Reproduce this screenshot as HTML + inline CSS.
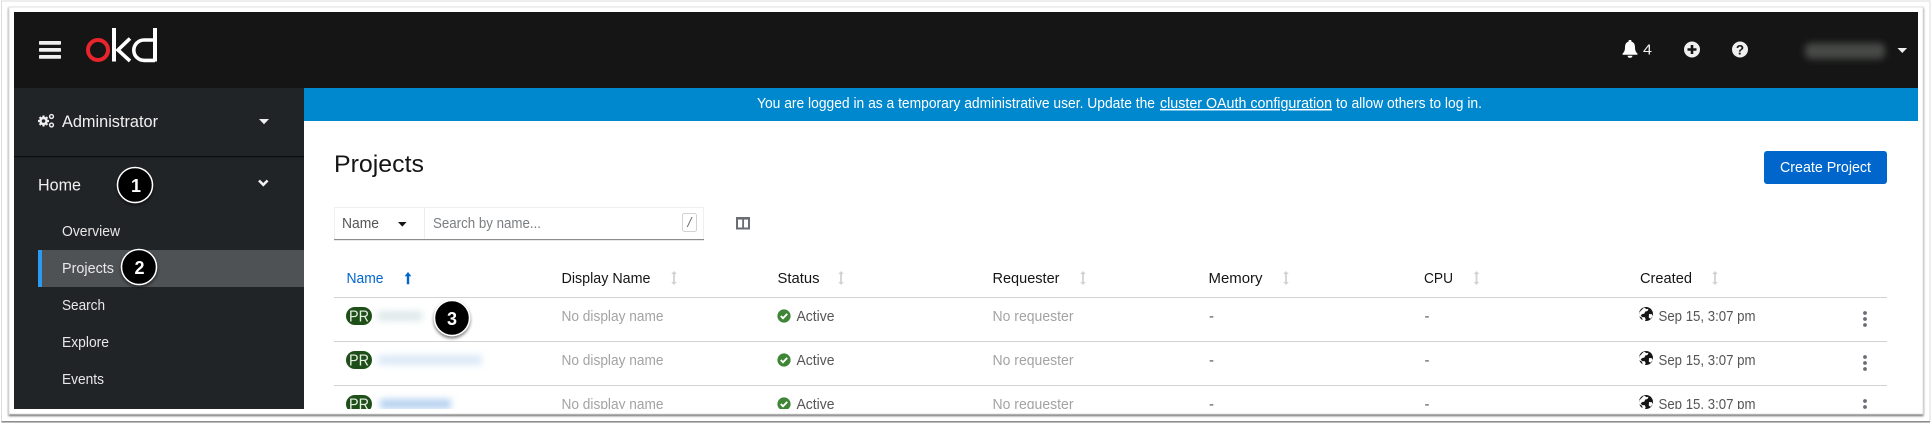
<!DOCTYPE html>
<html><head><meta charset="utf-8"><style>
html,body{margin:0;padding:0;background:#fff;width:1932px;height:425px;overflow:hidden}
svg{display:block}
text{font-family:"Liberation Sans",sans-serif}
.s{font-size:15px;fill:#e8e8e8}
.h{font-size:15px;fill:#151515}
.m{font-size:15px;fill:#a3a3a3}
.d{font-size:15px;fill:#555}
.c{font-size:18px;font-weight:bold;fill:#fff;text-anchor:middle}
</style></head><body>
<svg width="1932" height="425" viewBox="0 0 1932 425" xmlns="http://www.w3.org/2000/svg">
<defs>
<filter id="b" x="-30%" y="-100%" width="160%" height="300%"><feGaussianBlur stdDeviation="3.5"/></filter>
<filter id="sh" x="-5%" y="-5%" width="110%" height="110%"><feDropShadow dx="0" dy="1.5" stdDeviation="1" flood-color="#555" flood-opacity=".9"/></filter>
<filter id="cs" x="-40%" y="-40%" width="180%" height="180%"><feDropShadow dx="0" dy="2" stdDeviation="1.5" flood-color="#000" flood-opacity=".55"/></filter>
<clipPath id="app"><rect x="14" y="12" width="1904" height="397"/></clipPath>
<g id="sort"><path d="M0 -7l-2.8 3h1.9v8h-1.9l2.8 3 2.8-3h-1.9v-8h1.9z" fill="#d2d2d2"/></g>
<g id="chk"><circle r="6.6" fill="#3e8635"/><path d="M-3.2 0l2.2 2.3 4.2-4.4" fill="none" stroke="#fff" stroke-width="1.9"/></g>
<g id="globe"><circle r="7" fill="#151515"/><path d="M-2-6.5l2.5 1.6 2-.4-1 2.3-2.4.6-.6 1.9-2.5.6-1.3 1.6 1.6 1.4 2.6.1.8 2.2-1.2 2.4-1.6-.8-1-3.4-3-1.6.4-3.6zM3 0l3 .2.8 2-2.4 2.6-1.6-1.2z" fill="#fff"/></g>
<g id="keb" fill="#6a6e73"><circle cx="0" cy="-6" r="1.9"/><circle cx="0" cy="0" r="1.9"/><circle cx="0" cy="6" r="1.9"/></g>
</defs>

<rect width="1932" height="425" fill="#fff"/>
<rect x="1.5" y="1" width="1928.5" height="420.5" fill="#fff" stroke="#dcdcdc" stroke-width="1"/>
<rect x="1.5" y="421" width="1928.5" height="1.6" fill="#8e8e8e"/>
<rect x="9" y="7" width="1914" height="407" fill="#fff" stroke="#e2e2e2" stroke-width="1" filter="url(#sh)"/>

<g clip-path="url(#app)">
<rect x="14" y="12" width="1904" height="397" fill="#fff"/>
<rect x="14" y="12" width="1904" height="76" fill="#151515"/>
<rect x="14" y="88" width="290" height="321" fill="#212427"/>
<rect x="304" y="88" width="1614" height="33" fill="#0088ce"/>

<!-- masthead -->
<g fill="#f0f0f0"><rect x="39" y="41" width="22" height="3.8" rx=".8"/><rect x="39" y="48" width="22" height="3.8" rx=".8"/><rect x="39" y="55" width="22" height="3.8" rx=".8"/></g>
<circle cx="98" cy="50" r="10" fill="none" stroke="#e8242c" stroke-width="4"/>
<rect x="112" y="28" width="4" height="33.5" fill="#fff"/>
<path d="M130 38.5l-12 11.5 12 11" fill="none" stroke="#fff" stroke-width="3.6"/>
<rect x="153" y="28" width="4" height="33.5" fill="#fff"/>
<path d="M155 40h-11a10.2 10.2 0 0 0 0 20.4h11" fill="none" stroke="#fff" stroke-width="3.6"/>

<path d="M1630 41.5c-3.6 0-5 2.6-5 5.6 0 3.6-1 5-2.4 6.4v1.2h14.8v-1.2c-1.4-1.4-2.4-2.8-2.4-6.4 0-3 -1.4-5.6-5-5.6z" fill="#fff"/><rect x="1628.5" y="40" width="3" height="2.5" rx="1" fill="#fff"/><path d="M1627.5 55.8h5a2.5 2 0 0 1-5 0z" fill="#fff"/>
<text x="1643" y="54.5" style="font-size:15px" fill="#f0f0f0" textLength="9" lengthAdjust="spacingAndGlyphs">4</text>
<circle cx="1692" cy="49.5" r="8" fill="#f0f0f0"/><path d="M1692 45v9M1687.5 49.5h9" stroke="#151515" stroke-width="2.6"/>
<circle cx="1740" cy="49.5" r="8" fill="#f0f0f0"/>
<text x="1740" y="54.5" text-anchor="middle" style="font-size:13.5px;font-weight:bold" fill="#151515">?</text>
<rect x="1805" y="43" width="80" height="16" rx="6" fill="#474847" filter="url(#b)"/>
<path d="M1897.5 48h9.6l-4.8 5z" fill="#f0f0f0"/>

<!-- nav -->
<path d="M43.5 115.5v11M38 121h11M39.6 117.1l7.8 7.8M47.4 117.1l-7.8 7.8" stroke="#f0f0f0" stroke-width="2.2"/>
<circle cx="43.5" cy="121" r="4.2" fill="#f0f0f0"/><circle cx="43.5" cy="121" r="1.8" fill="#212427"/>
<circle cx="51.5" cy="116.5" r="1.9" fill="none" stroke="#f0f0f0" stroke-width="1.4"/>
<circle cx="51.5" cy="125" r="1.9" fill="none" stroke="#f0f0f0" stroke-width="1.4"/>
<text x="62" y="127" style="font-size:16.5px" fill="#f0f0f0" textLength="96" lengthAdjust="spacingAndGlyphs">Administrator</text>
<path d="M259 119h10l-5 5.2z" fill="#f0f0f0"/>
<rect x="14" y="156" width="290" height="1.2" fill="#0c0d0e"/>
<text x="38" y="190.5" style="font-size:16.5px" fill="#f0f0f0" textLength="43" lengthAdjust="spacingAndGlyphs">Home</text>
<path d="M259 180.5l4.3 4.3 4.3-4.3" fill="none" stroke="#f0f0f0" stroke-width="2.6"/>
<rect x="38" y="250" width="266" height="37" fill="#4f5255"/>
<rect x="38" y="250" width="4" height="37" fill="#2b9af3"/>
<text class="s" x="62" y="236" textLength="58" lengthAdjust="spacingAndGlyphs">Overview</text>
<text class="s" x="62" y="273" textLength="52" lengthAdjust="spacingAndGlyphs">Projects</text>
<text class="s" x="62" y="310" textLength="43" lengthAdjust="spacingAndGlyphs">Search</text>
<text class="s" x="62" y="347" textLength="47" lengthAdjust="spacingAndGlyphs">Explore</text>
<text class="s" x="62" y="384" textLength="42" lengthAdjust="spacingAndGlyphs">Events</text>

<!-- banner -->
<text x="757" y="108" style="font-size:14.5px" fill="#fff" textLength="398" lengthAdjust="spacingAndGlyphs">You are logged in as a temporary administrative user. Update the</text>
<text x="1160" y="108" style="font-size:14.5px" fill="#fff" text-decoration="underline" textLength="172" lengthAdjust="spacingAndGlyphs">cluster OAuth configuration</text>
<text x="1336" y="108" style="font-size:14.5px" fill="#fff" textLength="146" lengthAdjust="spacingAndGlyphs">to allow others to log in.</text>

<!-- title -->
<text x="334" y="172" style="font-size:24.5px" fill="#151515" textLength="90" lengthAdjust="spacingAndGlyphs">Projects</text>
<rect x="1764" y="151" width="123" height="33" rx="3" fill="#0066cc"/>
<text x="1780" y="172" style="font-size:15px" fill="#fff" textLength="91" lengthAdjust="spacingAndGlyphs">Create Project</text>

<!-- toolbar -->
<rect x="334.5" y="207.5" width="369" height="32" fill="#fff" stroke="#f0f0f0"/>
<rect x="424" y="207" width="1" height="32" fill="#ededed"/>
<rect x="334" y="239" width="370" height="1.2" fill="#8a8d90"/>
<text x="342" y="228" style="font-size:15px" fill="#555" textLength="37" lengthAdjust="spacingAndGlyphs">Name</text>
<path d="M398 222h8.6l-4.3 4.6z" fill="#151515"/>
<text x="433" y="228" style="font-size:15px" fill="#7a7d80" textLength="108" lengthAdjust="spacingAndGlyphs">Search by name...</text>
<rect x="682.5" y="213.5" width="14" height="18" rx="2" fill="#fff" stroke="#d2d2d2"/>
<text x="689.5" y="227" text-anchor="middle" style="font-size:14px;font-style:italic" fill="#6a6e73">/</text>
<rect x="737" y="218" width="12" height="10.5" fill="#fff" stroke="#6a6e73" stroke-width="2"/><rect x="742.2" y="217" width="1.8" height="12" fill="#6a6e73"/><rect x="736" y="217" width="14" height="2.6" fill="#6a6e73"/>

<!-- table head -->
<text x="346.5" y="283" style="font-size:15px;font-weight:500" fill="#0066cc" textLength="37" lengthAdjust="spacingAndGlyphs">Name</text>
<path d="M408 272l-3.4 4.2h2.2v8h2.4v-8h2.2z" fill="#0066cc"/>
<text class="h" x="561.5" y="283" textLength="89" lengthAdjust="spacingAndGlyphs">Display Name</text>
<use href="#sort" x="674" y="278"/>
<text class="h" x="777.5" y="283" textLength="42" lengthAdjust="spacingAndGlyphs">Status</text>
<use href="#sort" x="841" y="278"/>
<text class="h" x="992.5" y="283" textLength="67" lengthAdjust="spacingAndGlyphs">Requester</text>
<use href="#sort" x="1083" y="278"/>
<text class="h" x="1208.5" y="283" textLength="54" lengthAdjust="spacingAndGlyphs">Memory</text>
<use href="#sort" x="1286" y="278"/>
<text class="h" x="1424" y="283" textLength="29" lengthAdjust="spacingAndGlyphs">CPU</text>
<use href="#sort" x="1476.5" y="278"/>
<text class="h" x="1640" y="283" textLength="52" lengthAdjust="spacingAndGlyphs">Created</text>
<use href="#sort" x="1715" y="278"/>

<g fill="#d2d2d2"><rect x="334" y="297" width="1553" height="1"/><rect x="334" y="341" width="1553" height="1"/><rect x="334" y="385" width="1553" height="1"/></g>

<!-- row 1 -->
<rect x="346" y="307" width="26" height="18" rx="9" fill="#1e4f18"/>
<text x="359" y="321.5" text-anchor="middle" style="font-size:15.5px" fill="#e8f0e6" textLength="20" lengthAdjust="spacingAndGlyphs">PR</text>
<rect x="378" y="311" width="44" height="10" fill="#cfe0df" filter="url(#b)" opacity=".7"/>
<text class="m" x="561.5" y="321" textLength="102" lengthAdjust="spacingAndGlyphs">No display name</text>
<use href="#chk" x="784" y="316"/>
<text class="d" x="796.5" y="321" textLength="38" lengthAdjust="spacingAndGlyphs">Active</text>
<text class="m" x="992.5" y="321" textLength="81" lengthAdjust="spacingAndGlyphs">No requester</text>
<text class="d" x="1209" y="321">-</text><text class="d" x="1424.5" y="321">-</text>
<use href="#globe" x="1646" y="314"/>
<text class="d" x="1658.5" y="321" textLength="97" lengthAdjust="spacingAndGlyphs">Sep 15, 3:07 pm</text>
<use href="#keb" x="1865" y="319"/>

<!-- row 2 -->
<rect x="346" y="351" width="26" height="18" rx="9" fill="#1e4f18"/>
<text x="359" y="365.5" text-anchor="middle" style="font-size:15.5px" fill="#e8f0e6" textLength="20" lengthAdjust="spacingAndGlyphs">PR</text>
<rect x="378" y="355" width="104" height="10" fill="#d3e4f5" filter="url(#b)" opacity=".8"/>
<text class="m" x="561.5" y="365" textLength="102" lengthAdjust="spacingAndGlyphs">No display name</text>
<use href="#chk" x="784" y="360"/>
<text class="d" x="796.5" y="365" textLength="38" lengthAdjust="spacingAndGlyphs">Active</text>
<text class="m" x="992.5" y="365" textLength="81" lengthAdjust="spacingAndGlyphs">No requester</text>
<text class="d" x="1209" y="365">-</text><text class="d" x="1424.5" y="365">-</text>
<use href="#globe" x="1646" y="358"/>
<text class="d" x="1658.5" y="365" textLength="97" lengthAdjust="spacingAndGlyphs">Sep 15, 3:07 pm</text>
<use href="#keb" x="1865" y="363"/>

<!-- row 3 -->
<rect x="346" y="395" width="26" height="18" rx="9" fill="#1e4f18"/>
<text x="359" y="409.5" text-anchor="middle" style="font-size:15.5px" fill="#e8f0e6" textLength="20" lengthAdjust="spacingAndGlyphs">PR</text>
<rect x="380" y="399" width="71" height="10" fill="#b7d2f0" filter="url(#b)"/>
<text class="m" x="561.5" y="409" textLength="102" lengthAdjust="spacingAndGlyphs">No display name</text>
<use href="#chk" x="784" y="404"/>
<text class="d" x="796.5" y="409" textLength="38" lengthAdjust="spacingAndGlyphs">Active</text>
<text class="m" x="992.5" y="409" textLength="81" lengthAdjust="spacingAndGlyphs">No requester</text>
<text class="d" x="1209" y="409">-</text><text class="d" x="1424.5" y="409">-</text>
<use href="#globe" x="1646" y="402"/>
<text class="d" x="1658.5" y="409" textLength="97" lengthAdjust="spacingAndGlyphs">Sep 15, 3:07 pm</text>
<use href="#keb" x="1865" y="407"/>
</g>

<!-- callouts -->
<g filter="url(#cs)"><circle cx="135" cy="185" r="17.5" fill="#000" stroke="#fff" stroke-width="1.5"/></g>
<text class="c" x="136" y="192">1</text>
<g filter="url(#cs)"><circle cx="139" cy="267" r="17.5" fill="#000" stroke="#fff" stroke-width="1.5"/></g>
<text class="c" x="139.5" y="274">2</text>
<g filter="url(#cs)"><circle cx="452" cy="318" r="17.5" fill="#000" stroke="#fff" stroke-width="1.5"/></g>
<text class="c" x="452" y="325">3</text>
</svg>
</body></html>
